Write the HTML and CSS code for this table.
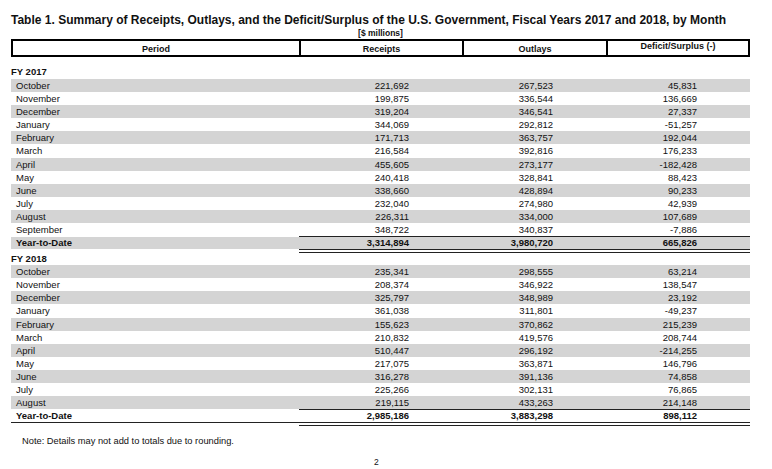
FILE: index.html
```html
<!DOCTYPE html>
<html>
<head>
<meta charset="utf-8">
<link rel="stylesheet" href="styles.css">
</head>
<body>
<div class="page">
  <div class="title">Table 1. Summary of Receipts, Outlays, and the Deficit/Surplus of the U.S. Government, Fiscal Years 2017 and 2018, by Month</div>
  <div class="cols units"><span></span><span class="c">[$ millions]</span><span></span><span></span></div>
  <div class="cols head">
    <div class="h">Period</div>
    <div class="h">Receipts</div>
    <div class="h">Outlays</div>
    <div class="h up">Deficit/Surplus (-)</div>
  </div>

  <div class="fy first">FY 2017</div>
  <div class="cols row g"><div class="l">October</div><div class="n">221,692</div><div class="n">267,523</div><div class="n">45,831</div></div>
  <div class="cols row"><div class="l">November</div><div class="n">199,875</div><div class="n">336,544</div><div class="n">136,669</div></div>
  <div class="cols row g"><div class="l">December</div><div class="n">319,204</div><div class="n">346,541</div><div class="n">27,337</div></div>
  <div class="cols row"><div class="l">January</div><div class="n">344,069</div><div class="n">292,812</div><div class="n">-51,257</div></div>
  <div class="cols row g"><div class="l">February</div><div class="n">171,713</div><div class="n">363,757</div><div class="n">192,044</div></div>
  <div class="cols row"><div class="l">March</div><div class="n">216,584</div><div class="n">392,816</div><div class="n">176,233</div></div>
  <div class="cols row g"><div class="l">April</div><div class="n">455,605</div><div class="n">273,177</div><div class="n">-182,428</div></div>
  <div class="cols row"><div class="l">May</div><div class="n">240,418</div><div class="n">328,841</div><div class="n">88,423</div></div>
  <div class="cols row g"><div class="l">June</div><div class="n">338,660</div><div class="n">428,894</div><div class="n">90,233</div></div>
  <div class="cols row"><div class="l">July</div><div class="n">232,040</div><div class="n">274,980</div><div class="n">42,939</div></div>
  <div class="cols row g"><div class="l">August</div><div class="n">226,311</div><div class="n">334,000</div><div class="n">107,689</div></div>
  <div class="cols row"><div class="l">September</div><div class="n">348,722</div><div class="n">340,837</div><div class="n">-7,886</div></div>
  <div class="cols ytd shaded"><div class="l">Year-to-Date</div><div class="n">3,314,894</div><div class="n">3,980,720</div><div class="n">665,826</div></div>

  <div class="fy second">FY 2018</div>
  <div class="cols row g"><div class="l">October</div><div class="n">235,341</div><div class="n">298,555</div><div class="n">63,214</div></div>
  <div class="cols row"><div class="l">November</div><div class="n">208,374</div><div class="n">346,922</div><div class="n">138,547</div></div>
  <div class="cols row g"><div class="l">December</div><div class="n">325,797</div><div class="n">348,989</div><div class="n">23,192</div></div>
  <div class="cols row"><div class="l">January</div><div class="n">361,038</div><div class="n">311,801</div><div class="n">-49,237</div></div>
  <div class="cols row g"><div class="l">February</div><div class="n">155,623</div><div class="n">370,862</div><div class="n">215,239</div></div>
  <div class="cols row"><div class="l">March</div><div class="n">210,832</div><div class="n">419,576</div><div class="n">208,744</div></div>
  <div class="cols row g"><div class="l">April</div><div class="n">510,447</div><div class="n">296,192</div><div class="n">-214,255</div></div>
  <div class="cols row"><div class="l">May</div><div class="n">217,075</div><div class="n">363,871</div><div class="n">146,796</div></div>
  <div class="cols row g"><div class="l">June</div><div class="n">316,278</div><div class="n">391,136</div><div class="n">74,858</div></div>
  <div class="cols row"><div class="l">July</div><div class="n">225,266</div><div class="n">302,131</div><div class="n">76,865</div></div>
  <div class="cols row g"><div class="l">August</div><div class="n">219,115</div><div class="n">433,263</div><div class="n">214,148</div></div>
  <div class="cols ytd closing"><div class="l">Year-to-Date</div><div class="n">2,985,186</div><div class="n">3,883,298</div><div class="n">898,112</div></div>

  <div class="note">Note: Details may not add to totals due to rounding.</div>
  <div class="pageno">2</div>
</div>
</body>
</html>
```
FILE: styles.css
```css
html, body {
  margin: 0;
  padding: 0;
  background: #fff;
}
body {
  font-family: "Liberation Sans", Arial, sans-serif;
  color: #111;
}
.page {
  width: 739px;
  padding: 12px 0 0 11px;
}
.title {
  font-weight: bold;
  font-size: 12px;
  line-height: 16px;
  white-space: nowrap;
}
.cols {
  display: grid;
  grid-template-columns: 288px 163px 144px 144px;
}
.units {
  font-weight: bold;
  font-size: 8.5px;
  line-height: 10px;
}
.units .c {
  text-align: center;
}
.head {
  border: 2px solid #000;
  height: 18px;
  box-sizing: border-box;
  margin-top: 1px;
  grid-template-columns: 286px 163px 144px 142px;
}
.h {
  font-weight: bold;
  font-size: 9px;
  line-height: 14px;
  text-align: center;
  padding-top: 1px;
}
.h + .h {
  border-left: 2px solid #000;
}
.h.up {
  padding-top: 0;
  line-height: 11px;
}
.fy {
  font-weight: bold;
  font-size: 9.5px;
  line-height: 14px;
}
.fy.first {
  margin-top: 8px;
}
.fy.second {
  line-height: 11px;
  padding-bottom: 1px;
}
.row {
  height: 13.1px;
  line-height: 13.1px;
  font-size: 9.5px;
}
.row.g {
  background: #d4d4d4;
}
.l {
  padding-left: 5px;
}
.n {
  text-align: right;
  padding-right: 53px;
}
.ytd {
  font-size: 9.5px;
  font-weight: bold;
  line-height: 12px;
}
.ytd > div {
  background-clip: padding-box;
}
.ytd .n {
  border-top: 1px solid #222;
  border-bottom: 4px double #222;
}
.ytd .l {
  border-top: 1px solid transparent;
}
.shaded > div {
  background-color: #d4d4d4;
}
.shaded .l {
  border-bottom: 4px solid transparent;
}
.closing .l {
  border-bottom: 1px solid #222;
  margin-bottom: 3px;
}
.note {
  font-size: 9.3px;
  line-height: 12px;
  margin-top: 9px;
  padding-left: 11px;
}
.pageno {
  font-size: 8.5px;
  line-height: 10px;
  margin-top: 10px;
  padding-left: 363px;
}
```
